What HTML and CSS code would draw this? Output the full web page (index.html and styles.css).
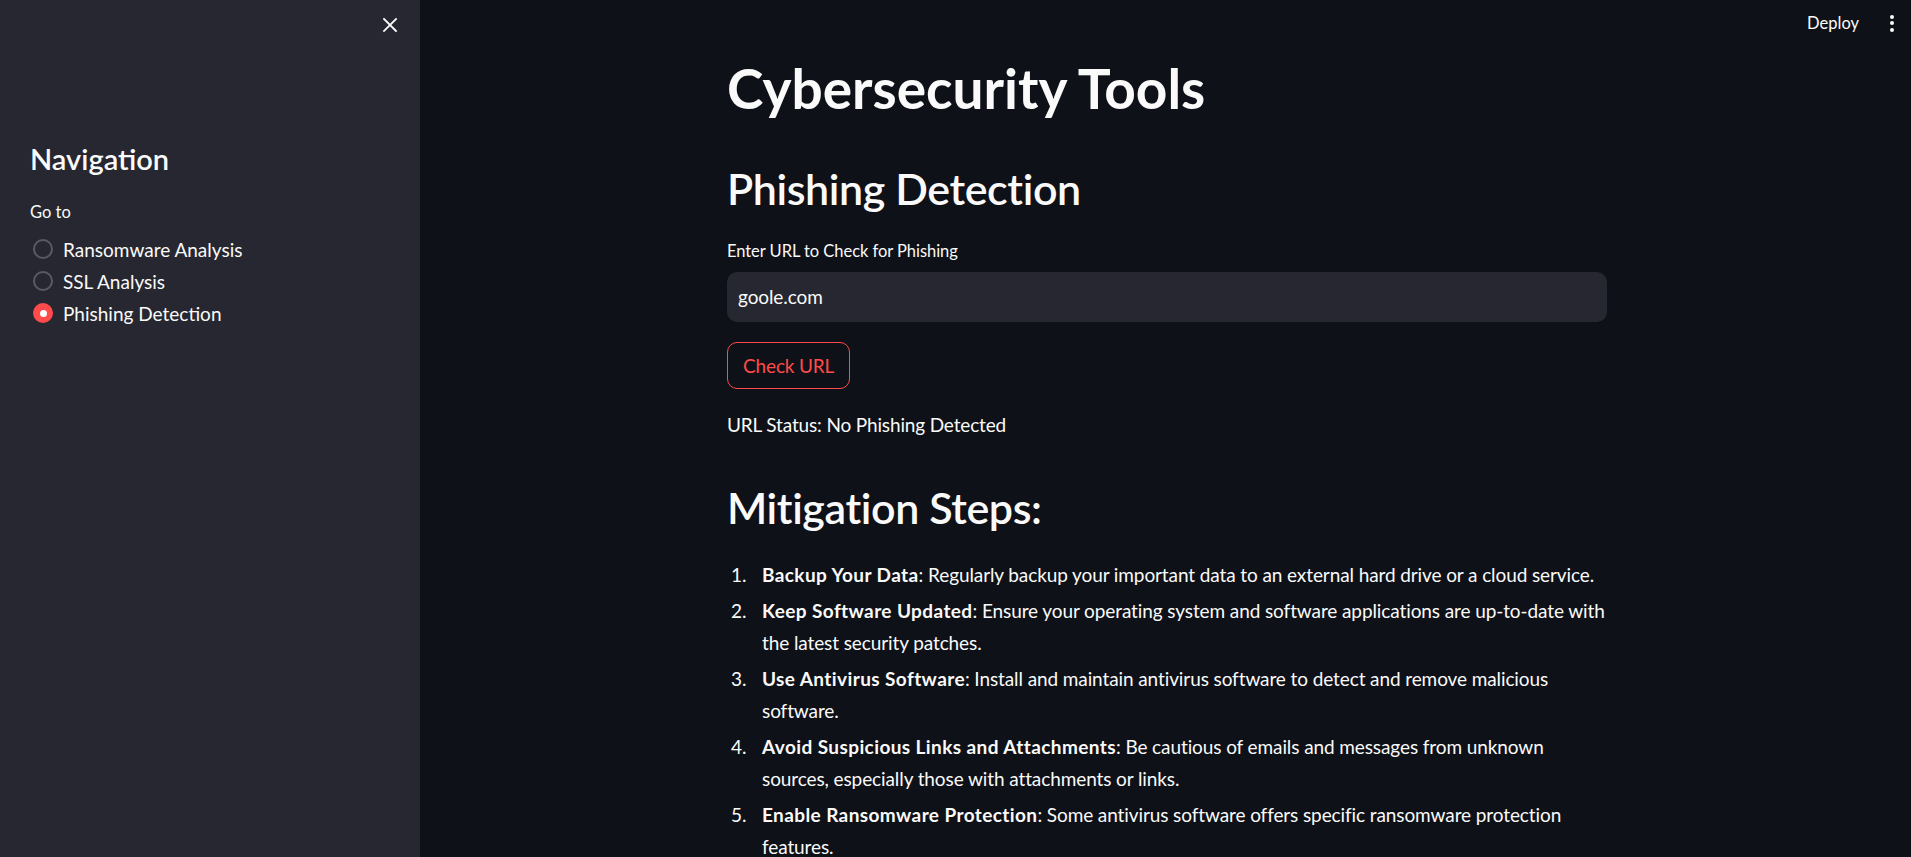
FILE: index.html
```html
<!DOCTYPE html>
<html lang="en">
<head>
<meta charset="utf-8">
<title>Cybersecurity Tools</title>
<link rel="stylesheet" href="styles.css">
</head>
<body>
<aside class="sidebar">
  <div class="sidebar-top">
    <button class="close-btn" aria-label="Close sidebar">
      <svg width="16" height="16" viewBox="0 0 16 16"><path d="M2 2 L14 14 M14 2 L2 14" stroke="#fafafa" stroke-width="1.8" stroke-linecap="square"/></svg>
    </button>
  </div>
  <div class="sidebar-body">
    <h2 class="side-title">Navigation</h2>
    <div class="side-label">Go to</div>
    <div class="radio-group">
      <label class="radio-row"><span class="radio"></span><span class="radio-text">Ransomware Analysis</span></label>
      <label class="radio-row"><span class="radio"></span><span class="radio-text">SSL Analysis</span></label>
      <label class="radio-row"><span class="radio radio-on"><span class="radio-dot"></span></span><span class="radio-text">Phishing Detection</span></label>
    </div>
  </div>
</aside>
<main class="main">
  <div class="toolbar">
    <span class="deploy">Deploy</span>
    <span class="menu-dots"><i></i><i></i><i></i></span>
  </div>
  <div class="block">
    <h1 class="title">Cybersecurity Tools</h1>
    <h2 class="h2 h2-first">Phishing Detection</h2>
    <div class="field-label">Enter URL to Check for Phishing</div>
    <div class="input">goole.com</div>
    <button class="btn">Check URL</button>
    <p class="status">URL Status: No Phishing Detected</p>
    <h2 class="h2 h2-second">Mitigation Steps:</h2>
    <ol class="steps">
      <li><span class="step-text"><b>Backup Your Data</b>: Regularly backup your important data to an external hard drive or a cloud service.</span></li>
      <li><span class="step-text"><b>Keep Software Updated</b>: Ensure your operating system and software applications are up-to-date with the latest security patches.</span></li>
      <li><span class="step-text"><b>Use Antivirus Software</b>: Install and maintain antivirus software to detect and remove malicious software.</span></li>
      <li><span class="step-text"><b>Avoid Suspicious Links and Attachments</b>: Be cautious of emails and messages from unknown sources, especially those with attachments or links.</span></li>
      <li><span class="step-text"><b>Enable Ransomware Protection</b>: Some antivirus software offers specific ransomware protection features.</span></li>
    </ol>
  </div>
</main>
</body>
</html>
```
FILE: styles.css
```css
* { box-sizing: border-box; }
html, body { margin: 0; padding: 0; height: 100%; }
body {
  display: flex;
  overflow: hidden;
  font-family: Lato, "Open Sans", sans-serif;
  color: #fafafa;
  background: #0e1117;
}
.sidebar {
  width: 420px;
  flex: none;
  background: #262730;
  height: 100vh;
}
.sidebar-top {
  display: flex;
  justify-content: flex-end;
  padding: 17px 22px 0 0;
  height: 50px;
}
.close-btn {
  background: none;
  border: 0;
  padding: 0;
  width: 16px;
  height: 16px;
  display: flex;
}
.sidebar-body { padding: 89px 30px 0 30px; }
.side-title {
  margin: 0;
  font-family: "Lato Semibold", Lato, sans-serif;
  font-size: 29px;
  line-height: 40px;
  font-weight: 600;
}
.side-label {
  margin-top: 20.6px;
  font-size: 16.5px;
  line-height: 24px;
}
.radio-group { margin-top: 9.5px; display: flex; flex-direction: column; }
.radio-row {
  height: 32px;
  display: flex;
  align-items: center;
  gap: 10px;
  padding-left: 3px;
  font-size: 19px;
}
.radio {
  width: 20px;
  height: 20px;
  border-radius: 50%;
  border: 2px solid #595a62;
  display: flex;
  align-items: center;
  justify-content: center;
}
.radio-on { background: #ff4b4b; border-color: #ff4b4b; }
.radio-dot { width: 7px; height: 7px; border-radius: 50%; background: #fff; }

.main {
  flex: 1;
  position: relative;
  height: 100vh;
}
.toolbar {
  position: absolute;
  top: 0;
  right: 0;
  height: 46px;
  display: flex;
  align-items: center;
  gap: 31px;
  padding-right: 17px;
}
.deploy { font-size: 16.5px; line-height: 24px; }
.menu-dots { display: flex; flex-direction: column; gap: 2.5px; }
.menu-dots i { display: block; width: 4px; height: 4px; border-radius: 50%; background: #fafafa; }

.block {
  width: 880px;
  margin-left: 307px;
  padding-top: 55px;
}
.title {
  margin: 0;
  font-size: 55px;
  line-height: 66px;
  font-weight: 700;
}
.h2 {
  margin: 0;
  font-family: "Lato Semibold", Lato, sans-serif;
  font-size: 43px;
  line-height: 54px;
  font-weight: 600;
  letter-spacing: -0.4px;
}
.h2-first { margin-top: 41px; }
.field-label {
  margin-top: 23px;
  font-size: 16.5px;
  line-height: 24px;
  letter-spacing: -0.05px;
}
.input {
  margin-top: 8.5px;
  height: 50px;
  background: #262730;
  border-radius: 10px;
  display: flex;
  align-items: center;
  padding: 0 11px;
  font-size: 19px;
  letter-spacing: -0.1px;
}
.btn {
  display: flex;
  align-items: center;
  margin-top: 20px;
  height: 47px;
  padding: 0 15px;
  background: #0e1117;
  border: 1px solid #ff4b4b;
  border-radius: 10px;
  color: #ff4b4b;
  font-family: inherit;
  font-size: 19px;
  letter-spacing: -0.15px;
}
.status {
  margin: 20.6px 0 0 0;
  font-size: 19px;
  line-height: 32px;
  letter-spacing: -0.15px;
}
.h2-second { margin-top: 39.7px; }
.steps {
  margin: 24.3px 0 0 0;
  padding: 0;
  list-style: none;
  counter-reset: step;
  font-size: 19px;
  line-height: 32px;
  letter-spacing: -0.1px;
}
.steps li {
  counter-increment: step;
  display: grid;
  grid-template-columns: 35px 847px;
  margin-top: 4px;
}
.steps li:first-child { margin-top: 0; }
.steps li::before {
  content: counter(step) ".";
  padding-left: 4px;
}
.steps b { font-weight: 700; letter-spacing: 0.4px; }
```
